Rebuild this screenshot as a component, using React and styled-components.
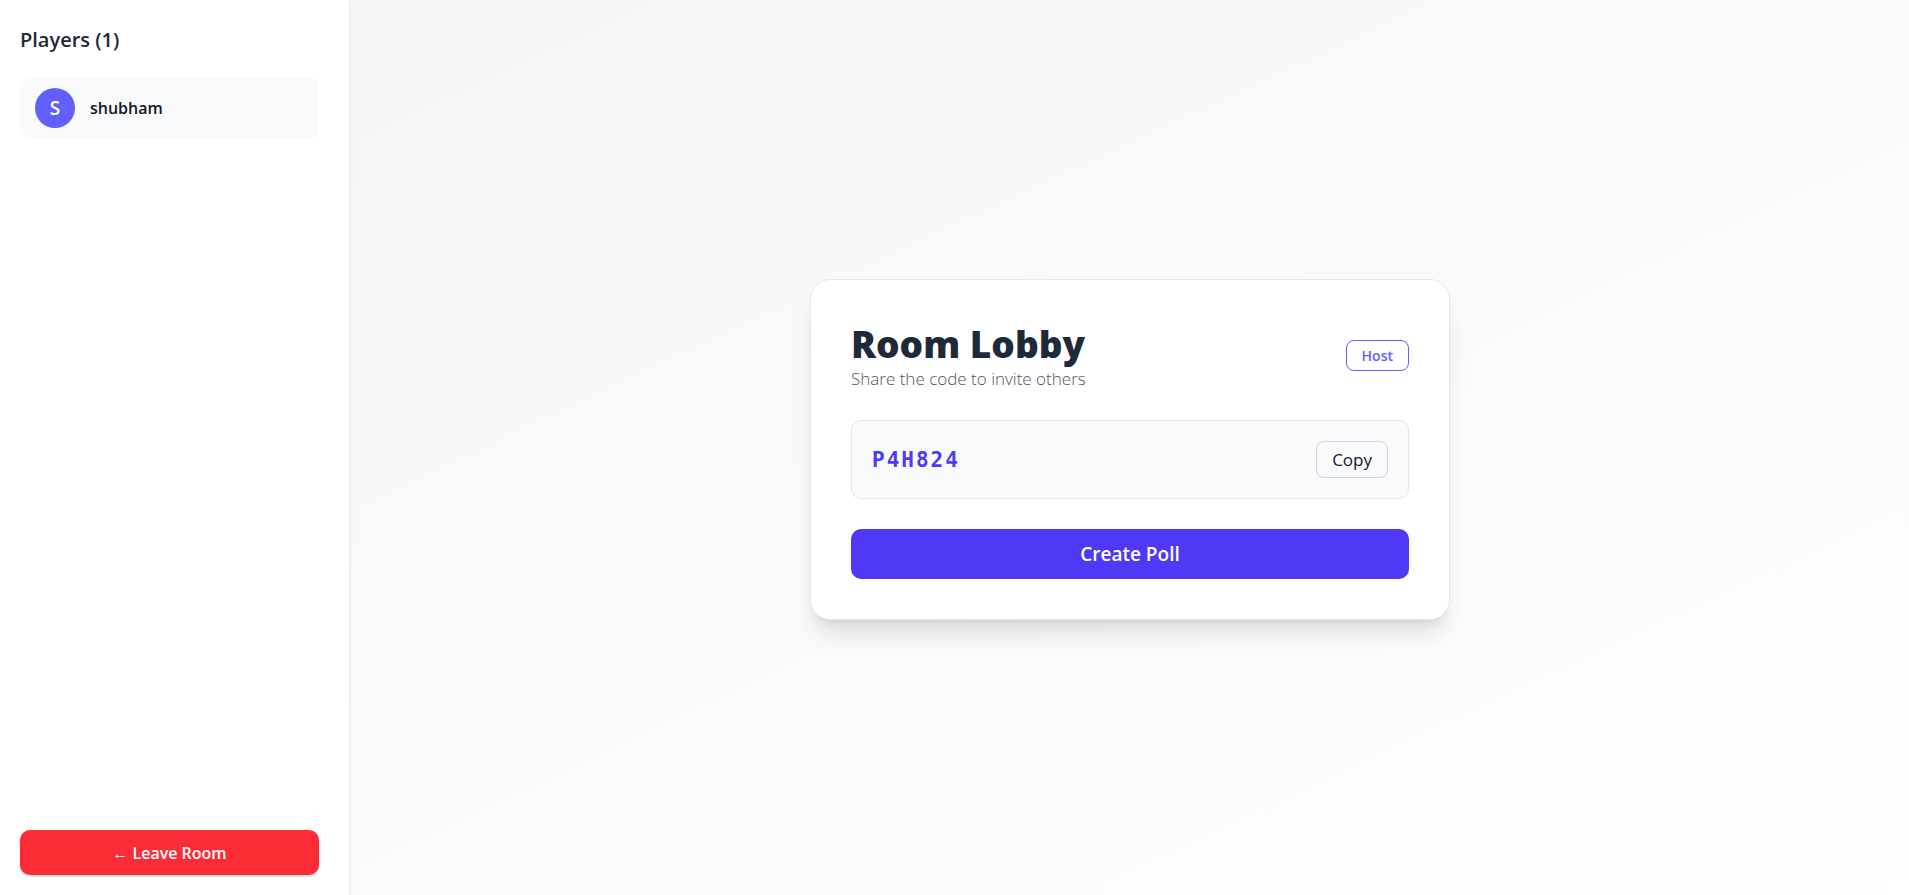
import React from "react";
import styled, { createGlobalStyle } from "styled-components";

const GlobalStyle = createGlobalStyle`
  *, *::before, *::after { box-sizing: border-box; }
  body { margin: 0; }
  body, button {
    font-family: "Segoe UI", "Open Sans", "Noto Sans", sans-serif;
  }
  h1, h2, p, ul { margin: 0; padding: 0; }
  button { cursor: pointer; }
`;

const Page = styled.div`
  display: flex;
  min-height: 100vh;
  color: #101828;
  background: linear-gradient(to bottom right, #f3f4f6, #ffffff);
`;

const Sidebar = styled.aside`
  flex: 0 0 349px;
  display: flex;
  flex-direction: column;
  padding: 20px 30px 20px 20px;
  background: #ffffff;
  box-shadow: 0 4px 6px -1px rgba(0, 0, 0, 0.1),
    0 2px 4px -2px rgba(0, 0, 0, 0.1);
`;

const SidebarTitle = styled.h2`
  margin-bottom: 18px;
  font-size: 20px;
  line-height: 40px;
  font-weight: 600;
  color: #1e2939;
`;

const PlayerList = styled.ul`
  flex: 1;
  list-style: none;
`;

const Player = styled.li`
  display: flex;
  align-items: center;
  gap: 15px;
  padding: 10px 15px;
  border-radius: 10px;
  background: #f9fafb;
  font-size: 16px;
  font-weight: 600;
`;

const Avatar = styled.span`
  display: flex;
  align-items: center;
  justify-content: center;
  width: 40px;
  height: 40px;
  border-radius: 50%;
  background: #615fff;
  color: #ffffff;
  font-size: 19px;
  font-weight: 600;
`;

const Button = styled.button`
  border: 0;
  border-radius: 10px;
  padding: 0 15px;
  color: #ffffff;
  font-weight: 600;
`;

const LeaveButton = styled(Button)`
  height: 45px;
  background: #fb2c36;
  font-size: 16px;
  box-shadow: 0 1px 3px rgba(0, 0, 0, 0.1), 0 1px 2px rgba(0, 0, 0, 0.1);
`;

const CreateButton = styled(Button)`
  width: 100%;
  height: 50px;
  background: #4f39f6;
  font-size: 19px;
`;

const Main = styled.main`
  flex: 1;
  display: flex;
  align-items: center;
  justify-content: center;
  padding: 24px 20px 20px 22px;
`;

const Card = styled.section`
  display: flex;
  flex-direction: column;
  gap: 30px;
  width: 100%;
  max-width: 640px;
  padding: 40px;
  border: 1px solid #e5e7eb;
  border-radius: 20px;
  background: #ffffff;
  box-shadow: 0 20px 25px -5px rgba(0, 0, 0, 0.1),
    0 8px 10px -6px rgba(0, 0, 0, 0.1);
`;

const CardHeader = styled.header`
  display: flex;
  align-items: center;
  justify-content: space-between;
`;

const Title = styled.h1`
  font-size: 37px;
  line-height: 47px;
  font-weight: 800;
  color: #1e2939;
`;

const Subtitle = styled.p`
  font-size: 17px;
  line-height: 23px;
  font-weight: 300;
  color: #4a5565;
`;

const OutlineButton = styled.button`
  padding: 0 15px;
  border: 1px solid #d1d5dc;
  border-radius: 8px;
  background: transparent;
`;

const HostButton = styled(OutlineButton)`
  height: 31px;
  border-color: #615fff;
  color: #615fff;
  font-size: 14px;
  font-weight: 600;
`;

const CopyButton = styled(OutlineButton)`
  height: 37px;
  color: #101828;
  font-size: 17px;
`;

const CodeBox = styled.div`
  display: flex;
  align-items: center;
  justify-content: space-between;
  padding: 20px;
  border: 1px solid #e5e7eb;
  border-radius: 10px;
  background: #f9fafb;
`;

const Code = styled.span`
  font-family: "DejaVu Sans Mono", monospace;
  font-size: 21px;
  font-weight: 700;
  letter-spacing: 2px;
  color: #4f39f6;
`;

const players = ["shubham"];

export default function App() {
  return (
    <>
      <GlobalStyle />
      <Page>
        <Sidebar>
          <SidebarTitle>Players ({players.length})</SidebarTitle>
          <PlayerList>
            {players.map((name) => (
              <Player key={name}>
                <Avatar>{name[0].toUpperCase()}</Avatar>
                <span>{name}</span>
              </Player>
            ))}
          </PlayerList>
          <LeaveButton type="button">← Leave Room</LeaveButton>
        </Sidebar>
        <Main>
          <Card>
            <CardHeader>
              <div>
                <Title>Room Lobby</Title>
                <Subtitle>Share the code to invite others</Subtitle>
              </div>
              <HostButton type="button">Host</HostButton>
            </CardHeader>
            <CodeBox>
              <Code>P4H824</Code>
              <CopyButton type="button">Copy</CopyButton>
            </CodeBox>
            <CreateButton type="button">Create Poll</CreateButton>
          </Card>
        </Main>
      </Page>
    </>
  );
}
